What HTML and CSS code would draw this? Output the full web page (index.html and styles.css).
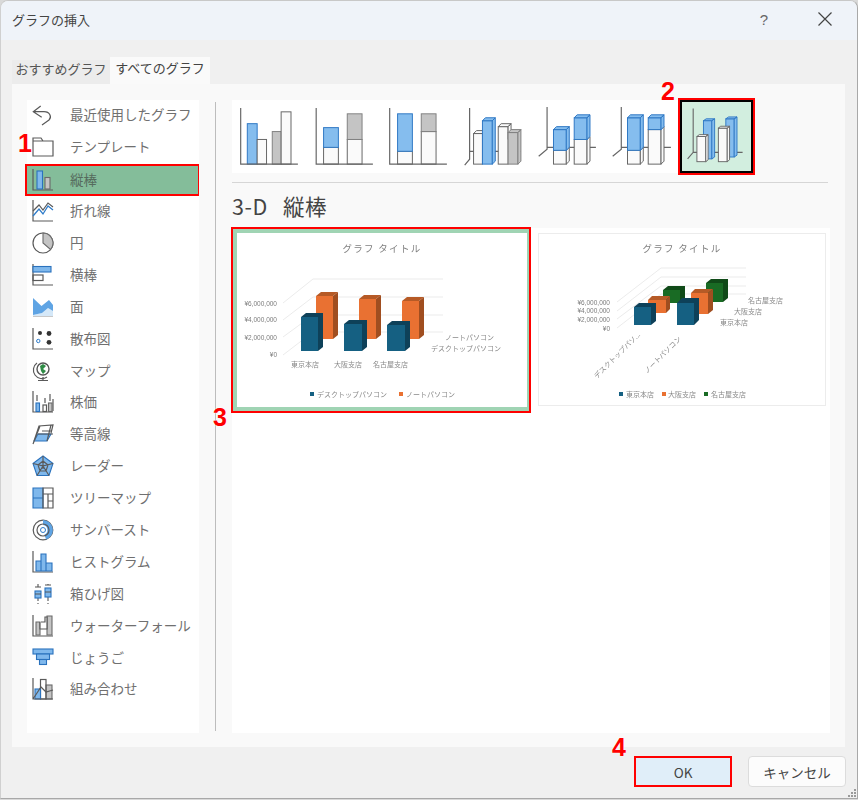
FILE: index.html
```html
<!DOCTYPE html>
<html lang="ja">
<head>
<meta charset="utf-8">
<title>グラフの挿入</title>
<link rel="stylesheet" href="styles.css">
</head>
<body>
<div class="dialog">
  <header class="titlebar">
    <span class="title">グラフの挿入</span>
    <span class="help">?</span>
    <svg class="close" width="16" height="16" viewBox="0 0 16 16"><path d="M1.5 1.5 14.5 14.5M14.5 1.5 1.5 14.5"/></svg>
  </header>
  <nav class="tabs">
    <span class="tab">おすすめグラフ</span>
    <span class="tab active">すべてのグラフ</span>
  </nav>
  <main class="panel">
    <ul class="side">
      <li class="item"><svg class="ic" viewBox="0 0 22 22"><path class="ln" d="M8.7 2 1.3 7.7 9.7 13.3M1.3 7.7H12C18 7.7 20 13 17 16L10 21"/></svg>最近使用したグラフ</li>
      <li class="item"><svg class="ic" viewBox="0 0 22 22"><path class="ln" d="M1 20V2H9L11 5H21V20ZM1 5H11"/></svg>テンプレート</li>
      <li class="item selected"><svg class="ic" viewBox="0 0 22 22"><path class="ln" d="M1 0V21H21"/><rect class="bl" x="5" y="2" width="5.5" height="18"/><rect class="gr" x="13" y="8.5" width="5" height="11.5"/></svg>縦棒</li>
      <li class="item"><svg class="ic" viewBox="0 0 22 22"><path class="ln" d="M1 0V21H21"/><path class="bs" d="M1 16 7 9 11 14 16 6 21 10"/><path class="ln" d="M1 11 7 5 11 10 16 3 21 7"/></svg>折れ線</li>
      <li class="item"><svg class="ic" viewBox="0 0 22 22"><circle class="ln" cx="11" cy="11" r="10"/><path class="gr" d="M11 11V1A10 10 0 0 1 18.5 17.5Z"/></svg>円</li>
      <li class="item"><svg class="ic" viewBox="0 0 22 22"><path class="ln" d="M1 0V21H21"/><rect class="bl" x="1" y="2.5" width="18" height="5.5"/><rect class="ln" x="1" y="11" width="10" height="5.5"/></svg>横棒</li>
      <li class="item"><svg class="ic" viewBox="0 0 22 22"><path class="fp" d="M1 19 10 17 16 12 21 15V20H1Z"/><path class="fb" d="M1 2 9.500 10 17 4 21 9V15L16 12 10 17 1 19Z"/><path class="fl" d="M1 20.500H21"/></svg>面</li>
      <li class="item"><svg class="ic" viewBox="0 0 22 22"><path class="ln" d="M1 0V21H21"/><circle class="dk" cx="8" cy="5" r="2"/><circle class="dk" cx="17" cy="5.500" r="2.400"/><circle class="bo" cx="6.300" cy="13" r="1.700"/><circle class="dk" cx="17" cy="14.300" r="2.400"/></svg>散布図</li>
      <li class="item"><svg class="ic" viewBox="0 0 22 22"><circle class="gl" cx="11" cy="9" r="6"/><path class="gn" d="M8 6 11 4 14 6 11 9 14 11 11 14 9 11Z"/><path class="ln" d="M5 3A8.5 8.5 0 0 0 15 17M11 17V20M6 20.500H16"/></svg>マップ</li>
      <li class="item"><svg class="ic" viewBox="0 0 22 22"><path class="ln" d="M1 0V21H21M5 4V10M13 7V12M18 3V10M21 8V20"/><rect class="bl" x="4" y="12" width="3.500" height="8.500"/><rect class="ln" x="11" y="14" width="3.500" height="6.500"/><rect class="gr" x="16.500" y="12" width="3.500" height="8.500"/></svg>株価</li>
      <li class="item"><svg class="ic" viewBox="0 0 22 22"><path class="bl" d="M6 11H19L15 18H2Z"/><path class="ln" d="M2 18 7 3 21 2 19 10M1 21 8 3M6 11H21M15 18 19 2M10 8H20"/></svg>等高線</li>
      <li class="item"><svg class="ic" viewBox="0 0 22 22"><path class="bl" d="M11 1 21 8.500 17 20.500H5L1 8.500Z"/><path class="ln" d="M11 6 16 10 14 16H8L6 10ZM11 1V14M21 8.500 11 11 17 20.500M1 8.500 11 11 5 20.500"/></svg>レーダー</li>
      <li class="item"><svg class="ic" viewBox="0 0 22 22"><path class="bl" d="M1 1H11V21H1ZM1 11H11"/><path class="ln" d="M11 1H21V21H11ZM11 7H21M16 7V21M16 14H21"/></svg>ツリーマップ</li>
      <li class="item"><svg class="ic" viewBox="0 0 22 22"><circle class="ln" cx="11" cy="11" r="9.800"/><path class="fb" d="M11 1A10 10 0 0 1 14 20.500L12.500 15.500A5 5 0 0 0 11 6Z"/><circle class="ln" cx="11" cy="11" r="6"/><circle class="bo" cx="11" cy="11" r="2.500"/></svg>サンバースト</li>
      <li class="item"><svg class="ic" viewBox="0 0 22 22"><path class="ln" d="M1 0V21H21"/><path class="bl" d="M4 20V10H9V3H14V12H20V20ZM9 10V20M14 12V20"/></svg>ヒストグラム</li>
      <li class="item"><svg class="ic" viewBox="0 0 22 22"><path class="dl" d="M6 1V4M6 15V18M6 20V21M16 1V2M16 14V18M16 20V21"/><rect class="bl" x="3" y="8" width="6" height="7"/><rect class="bl" x="13" y="5" width="6" height="9"/><path class="dl" d="M3 11H9M13 9H19M3 4H9M13 2H19"/></svg>箱ひげ図</li>
      <li class="item"><svg class="ic" viewBox="0 0 22 22"><path class="ln" d="M1 0V21H21"/><path class="gr" d="M4 20V7H8V20ZM15 20V1H20V20Z"/><path class="wf" d="M9 7H13V2H15V14H8V7"/></svg>ウォーターフォール</li>
      <li class="item"><svg class="ic" viewBox="0 0 22 22"><rect class="bl" x="1" y="2" width="20" height="5"/><rect class="bl" x="4.500" y="7" width="13" height="5.500"/><rect class="bl" x="7.500" y="12.500" width="7" height="5"/></svg>じょうご</li>
      <li class="item"><svg class="ic" viewBox="0 0 22 22"><rect class="gr" x="14" y="7" width="6" height="14"/><rect class="ln" x="8.500" y="1.500" width="5.500" height="19.500"/><rect class="bl" x="3" y="11" width="5.500" height="10"/><path class="ln" d="M1 0V21H21M1 21 9 9 14 14 21 12"/></svg>組み合わせ</li>
    </ul>
    <div class="divider"></div>
    <section class="content">
      <div class="thumbs">
        <svg class="thumb" viewBox="0 0 74 74"><rect class="tb" x="14.700" y="24" width="10" height="41"/><rect class="tw" x="24.700" y="40" width="9.500" height="25"/><rect class="tg" x="40" y="32" width="9" height="33"/><rect class="tw" x="49" y="12" width="10" height="53"/><path class="ax" d="M8 8V65H66"/></svg>
        <svg class="thumb" viewBox="0 0 74 74"><rect class="tw" x="16" y="48" width="15" height="17"/><rect class="tb" x="16" y="28" width="15" height="20"/><rect class="tw" x="40" y="40" width="15" height="25"/><rect class="tg" x="40" y="14" width="15" height="26"/><path class="ax" d="M8.500 8V65H66"/></svg>
        <svg class="thumb" viewBox="0 0 74 74"><rect class="tw" x="16" y="52" width="15" height="13"/><rect class="tb" x="16" y="14" width="15" height="38"/><rect class="tw" x="40" y="32" width="15" height="33"/><rect class="tg" x="40" y="14" width="15" height="18"/><path class="ax" d="M8 8V65H66"/></svg>
        <svg class="thumb" viewBox="0 0 74 74"><path class="ax" d="M13 8V60L8 66M13 52H65"/>
          <rect class="tw" x="17" y="34" width="9" height="31"/><path class="tw" d="M17 34 20 31H29L26 34Z"/>
          <rect class="tb" x="26" y="21" width="10" height="44"/><path class="tb" d="M26 21 29 18H39L36 21ZM36 21 39 18V62L36 65Z"/>
          <rect class="tw" x="42" y="27" width="10" height="38"/><path class="tw" d="M42 27 45 24H55L52 27ZM52 27 55 24V40H52Z"/>
          <rect class="tg" x="52" y="33" width="10" height="32"/><path class="tg" d="M52 33 55 30H65L62 33ZM62 33 65 30V62L62 65Z"/></svg>
        <svg class="thumb" viewBox="0 0 74 74"><path class="ax" d="M16.500 7V50L8 57M16.500 48H66"/>
          <rect class="tw" x="23" y="51" width="13" height="14"/><path class="tw" d="M36 51 39 48V62L36 65Z"/><rect class="tb" x="23" y="30" width="13" height="21"/><path class="tb" d="M23 30 26 27H39L36 30ZM36 30 39 27V48L36 51Z"/>
          <rect class="tw" x="44" y="40" width="13" height="25"/><path class="tw" d="M57 40 60 37V62L57 65Z"/><rect class="tb" x="44" y="18" width="13" height="22"/><path class="tb" d="M44 18 47 15H60L57 18ZM57 18 60 15V37L57 40Z"/></svg>
        <svg class="thumb" viewBox="0 0 74 74"><path class="ax" d="M15.700 7V50L7 57M15.700 48H66"/>
          <rect class="tw" x="22" y="51" width="13" height="14"/><path class="tw" d="M35 51 38 48V62L35 65Z"/><rect class="tb" x="22" y="18" width="13" height="33"/><path class="tb" d="M22 18 25 15H38L35 18ZM35 18 38 15V48L35 51Z"/>
          <rect class="tw" x="43" y="30" width="13" height="35"/><path class="tw" d="M56 30 59 27V62L56 65Z"/><rect class="tb" x="43" y="18" width="13" height="12"/><path class="tb" d="M43 18 46 15H59L56 18ZM56 18 59 15V27L56 30Z"/></svg>
        <div class="thumb-on"><svg class="thumb-sel" viewBox="0 0 74 74"><path class="ax" d="M12 7V54L6 61M12 54H65"/>
          <rect class="tb" x="23" y="20" width="9" height="41"/><path class="tb" d="M23 20 26 18H35L32 20ZM32 20 35 18V59L32 61Z"/>
          <rect class="tb" x="47" y="18" width="9" height="41"/><path class="tb" d="M47 18 50 16H59L56 18ZM56 18 59 16V57L56 59Z"/>
          <rect class="tw" x="16" y="37" width="9.500" height="27"/><path class="tw" d="M16 37 18.500 35H28L25.500 37ZM25.500 37 28 35V62L25.500 64Z"/>
          <rect class="tw" x="39" y="28" width="9.500" height="36"/><path class="tw" d="M39 28 41.500 26H51L48.500 28ZM48.500 28 51 26V62L48.500 64Z"/></svg></div>
      </div>
      <hr class="rule">
      <h2 class="heading">3-D 縦棒</h2>
      <div class="charts">
        <div class="chart-on">
          <svg class="chart" width="290" height="174" viewBox="0 0 290 174">
            <text class="ct" x="145" y="19" text-anchor="middle">グラフ タイトル</text>
            <path class="grid" d="M76 46H206M76 64H206M76 82H206M76 99H206M46 70 76 46M46 87 76 64M46 104 76 82M46 122 76 99"/>
            <g class="or">
              <path class="ot" d="M79 63 84 59H101L96 63Z"/><path class="os" d="M96 63 101 59V102L96 106Z"/><rect x="79" y="63" width="17" height="43"/>
              <path class="ot" d="M122 66 127 62H144L139 66Z"/><path class="os" d="M139 66 144 62V102L139 106Z"/><rect x="122" y="66" width="17" height="40"/>
              <path class="ot" d="M165 68 170 64H187L182 68Z"/><path class="os" d="M182 68 187 64V102L182 106Z"/><rect x="165" y="68" width="17" height="38"/>
            </g>
            <g class="bu">
              <path class="bt" d="M64 84 69 80H86L81 84ZM81 84 86 80V114L81 118Z"/><rect x="64" y="84" width="17" height="34"/>
              <path class="bt" d="M107 91 112 87H130L125 91ZM125 91 130 87V114L125 118Z"/><rect x="107" y="91" width="18" height="27"/>
              <path class="bt" d="M150 92 155 88H173L168 92ZM168 92 173 88V114L168 118Z"/><rect x="150" y="92" width="18" height="26"/>
            </g>
            <g class="lab">
              <text x="40" y="72.500" text-anchor="end">¥6,000,000</text>
              <text x="40" y="89" text-anchor="end">¥4,000,000</text>
              <text x="40" y="106.500" text-anchor="end">¥2,000,000</text>
              <text x="40" y="123.500" text-anchor="end">¥0</text>
            </g>
            <g class="cat">
              <text x="54" y="134">東京本店</text><text x="97" y="134">大阪支店</text><text x="136" y="134">名古屋支店</text>
              <text x="208" y="107">ノートパソコン</text><text x="194" y="118">デスクトップパソコン</text>
              <text x="80" y="164">デスクトップパソコン</text><text x="169" y="164">ノートパソコン</text>
            </g>
            <rect class="s1" x="73" y="159" width="4" height="4"/><rect class="s2" x="162" y="159" width="4" height="4"/>
          </svg>
        </div>
        <div class="chart-off">
          <svg class="chart" width="286" height="171" viewBox="1 1 286 171">
            <text class="ct" x="144" y="19" text-anchor="middle">グラフ タイトル</text>
            <path class="grid" d="M123 35H208M123 44H208M123 53H208M123 61H208M79 69 123 35M79 78 123 44M79 86 123 53M79 95 123 61"/>
            <g class="gn3">
              <path class="gt" d="M125 57 130 53H147L142 57ZM142 57 147 53V66L142 70Z"/><rect x="125" y="57" width="17" height="13"/>
              <path class="gt" d="M168 50 173 46H190L185 50ZM185 50 190 46V65L185 69Z"/><rect x="168" y="50" width="17" height="19"/>
            </g>
            <g class="or">
              <path class="ot" d="M110 67 114 63H132L128 67Z"/><path class="os" d="M128 67 132 63V76L128 80Z"/><rect x="110" y="67" width="18" height="13"/>
              <path class="ot" d="M153 60 157 56H175L170 60Z"/><path class="os" d="M170 60 175 56V77L170 81Z"/><rect x="153" y="60" width="17" height="21"/>
            </g>
            <g class="bu">
              <path class="bt" d="M96 74 101 70H118L113 74ZM113 74 118 70V88L113 92Z"/><rect x="96" y="74" width="17" height="18"/>
              <path class="bt" d="M139 70 144 65H161L156 70ZM156 70 161 65V87L156 92Z"/><rect x="139" y="70" width="17" height="22"/>
            </g>
            <g class="lab">
              <text x="72" y="71.500" text-anchor="end">¥6,000,000</text>
              <text x="72" y="80" text-anchor="end">¥4,000,000</text>
              <text x="72" y="88.500" text-anchor="end">¥2,000,000</text>
              <text x="72" y="97.500" text-anchor="end">¥0</text>
            </g>
            <g class="cat">
              <text x="182" y="92">東京本店</text><text x="196" y="81">大阪支店</text><text x="210" y="70">名古屋支店</text>
              <text transform="translate(59 146) rotate(-45)">デスクトップパソ...</text>
              <text transform="translate(109 141) rotate(-45)">ノートパソコン</text>
              <text x="88" y="164">東京本店</text><text x="130" y="164">大阪支店</text><text x="173" y="164">名古屋支店</text>
            </g>
            <rect class="s1" x="81" y="159" width="4" height="4"/><rect class="s2" x="124" y="159" width="4" height="4"/><rect class="s3" x="166" y="159" width="4" height="4"/>
          </svg>
        </div>
      </div>
    </section>
  </main>
  <footer class="footer">
    <button class="btn ok">OK</button>
    <button class="btn">キャンセル</button>
  </footer>
  <svg class="grip" width="10" height="10" viewBox="0 0 10 10"><path d="M7 1h2v2H7zM4 4h2v2H4zM7 4h2v2H7zM1 7h2v2H1zM4 7h2v2H4zM7 7h2v2H7z"/></svg>
</div>
<span class="mark m1">1</span>
<span class="mark m2">2</span>
<span class="mark m3">3</span>
<span class="mark m4">4</span>
</body>
</html>
```

FILE: styles.css
```css
* { box-sizing: border-box; }
html, body { margin: 0; padding: 0; }
body {
  width: 858px;
  height: 800px;
  background: #d9d9d9;
  font-family: "Noto Sans CJK JP", "Noto Sans", sans-serif;
  position: relative;
  overflow: hidden;
}
.dialog {
  position: relative;
  width: 858px;
  height: 799px;
  display: flex;
  flex-direction: column;
  background: #f0f0f0;
  border: 1px solid #a8a8a8;
  border-left-color: #d0d0d0;
  border-top-color: #c8c8c8;
  border-radius: 8px 8px 0 0;
  overflow: hidden;
}
.titlebar {
  height: 39px;
  flex: none;
  display: flex;
  align-items: center;
  background: #eff3f9;
  padding: 0 0 3px 11px;
  color: #444;
}
.title { font-size: 13px; }
.help { margin-left: auto; font-size: 15px; color: #666; margin-right: 49px; font-family: "Liberation Sans", sans-serif; }
.close { margin-right: 24px; }
.close path { stroke: #444; stroke-width: 1.2; fill: none; }
.tabs {
  flex: none;
  display: flex;
  align-items: flex-end;
  height: 44px;
  padding-left: 11px;
}
.tab {
  width: 98px;
  height: 24px;
  font-size: 13px;
  line-height: 18px;
  text-align: center;
  color: #555;
  background: #ececec;
}
.tab.active {
  width: 100px;
  height: 27px;
  line-height: 21px;
  background: #fafafa;
  color: #444;
}
.panel {
  flex: none;
  height: 663px;
  margin: 0 12px 0 11px;
  padding: 16px 15px 14px;
  background: #f9f9f9;
  display: flex;
}
.side {
  list-style: none;
  margin: 0;
  padding: 0;
  width: 172px;
  flex: none;
  background: #fff;
}
.item {
  height: 31.9px;
  display: flex;
  align-items: center;
  gap: 16px;
  padding: 0 0 3px 5px;
  font-size: 13.5px;
  color: #707070;
}
.item.selected {
  margin-left: -2px;
  padding: 0 0 1px 5px;
  background: #84bd9a;
  border: 2px solid #f00;
  border-width: 2px 1.6px 2px 2px;
  color: #566b5d;
}
.ic { width: 22px; height: 22px; flex: none; overflow: visible; margin-top: 2px; }
.ln { fill: none; stroke: #5a5a5a; stroke-width: 1.2; }
.bl { fill: #7fb8ec; stroke: #2a72bd; stroke-width: 1.1; }
.gr { fill: #c4c4c4; stroke: #6a6a6a; stroke-width: 1.1; }
.bs { fill: none; stroke: #2f7cc9; stroke-width: 1.3; }
.fb { fill: #5fa4e4; stroke: none; }
.fp { fill: #d5e8f8; stroke: none; }
.fl { fill: none; stroke: #c8c8c8; stroke-width: 1; }
.dk { fill: #333; }
.bo { fill: #fff; stroke: #2f7cc9; stroke-width: 1; }
.gl { fill: #fff; stroke: #555; stroke-width: 1.4; }
.gn { fill: #2e8b45; }
.dl { fill: none; stroke: #555; stroke-width: 1.1; }
.wf { fill: #fff; stroke: #5a5a5a; stroke-width: 1.2; }
.divider { width: 1px; margin: 2px 16px 2px 16px; background: #bdbdbd; flex: none; }
.content { flex: none; width: 598px; position: relative; display: flex; flex-direction: column; }
.thumbs { display: flex; height: 73px; flex: none; }
.thumb { width: 74.6px; height: 73px; background: #fff; flex: none; display: block; }
.thumb-on {
  width: 73px;
  height: 73px;
  flex: none;
  border: 2px solid #000;
  outline: 2px solid #f00;
  background: #d2eedf;
}
.thumb-sel { width: 69px; height: 69px; display: block; }
.ax { fill: none; stroke: #666; stroke-width: 1.2; }
.tb { fill: #85bdee; stroke: #2f78c4; stroke-width: 1; }
.tw { fill: #fafafa; stroke: #666; stroke-width: 1; }
.tg { fill: #c4c4c4; stroke: #808080; stroke-width: 1; }
.rule { margin: 9px 2px 0 0; border: 0; height: 1px; background: #d6d6d6; flex: none; }
.heading {
  margin: 0;
  height: 45px;
  flex: none;
  font-size: 21.5px;
  font-weight: 400;
  line-height: 46px;
  color: #444;
  letter-spacing: .5px;
  word-spacing: 10px;
}
.charts {
  flex: 1;
  background: #fff;
  display: flex;
  align-items: flex-start;
  gap: 7px;
}
.chart-on {
  flex: none;
  width: 300px;
  height: 186px;
  margin: -1px 0 0 -1px;
  border: 2px solid #f00;
  background: #a0d4b4;
  padding: 4px;
}
.chart-off {
  flex: none;
  width: 288px;
  height: 173px;
  margin-top: 5px;
  border: 1px solid #ececec;
  background: #fff;
}
.chart { display: block; background: #fff; filter: blur(.35px); }
.ct { font-size: 9.500px; fill: #808080; letter-spacing: 1.300px; }
.grid { fill: none; stroke: #e6e6e6; stroke-width: .8; }
.or rect { fill: #e97132; }
.ot { fill: #b65a26; }
.os { fill: #a04e20; }
.bu rect { fill: #156082; }
.bt { fill: #0e4159; }
.gn3 rect { fill: #196b24; }
.gt { fill: #104a18; }
.lab text { font-family: "Liberation Sans", sans-serif; font-size: 6.500px; fill: #7c7c7c; }
.cat text { font-size: 7px; fill: #8a8a8a; }
.s1 { fill: #156082; }
.s2 { fill: #e97132; }
.s3 { fill: #196b24; }
.footer {
  flex: 1;
  display: flex;
  justify-content: flex-end;
  gap: 16px;
  padding: 9px 11px 0 0;
}
.btn {
  width: 98px;
  height: 31px;
  padding: 0;
  font-family: "Noto Sans CJK JP", "Noto Sans", sans-serif;
  font-size: 13.500px;
  color: #444;
  background: #fcfcfc;
  border: 1px solid #dcdcdc;
  border-radius: 4px;
}
.btn.ok { background: #e0eef9; border: 2px solid #f00; border-radius: 0; }
.grip { position: absolute; right: 0; bottom: 0; }
.grip path { fill: #9a9a9a; }
.mark {
  position: absolute;
  font-family: "Liberation Sans", sans-serif;
  font-weight: 700;
  font-size: 25px;
  line-height: 24px;
  color: #f00;
  text-shadow: 0 0 2px #fff;
}
.m1 { left: 18px; top: 131px; }
.m2 { left: 661px; top: 79px; }
.m3 { left: 213px; top: 405px; }
.m4 { left: 612px; top: 735px; }
```
